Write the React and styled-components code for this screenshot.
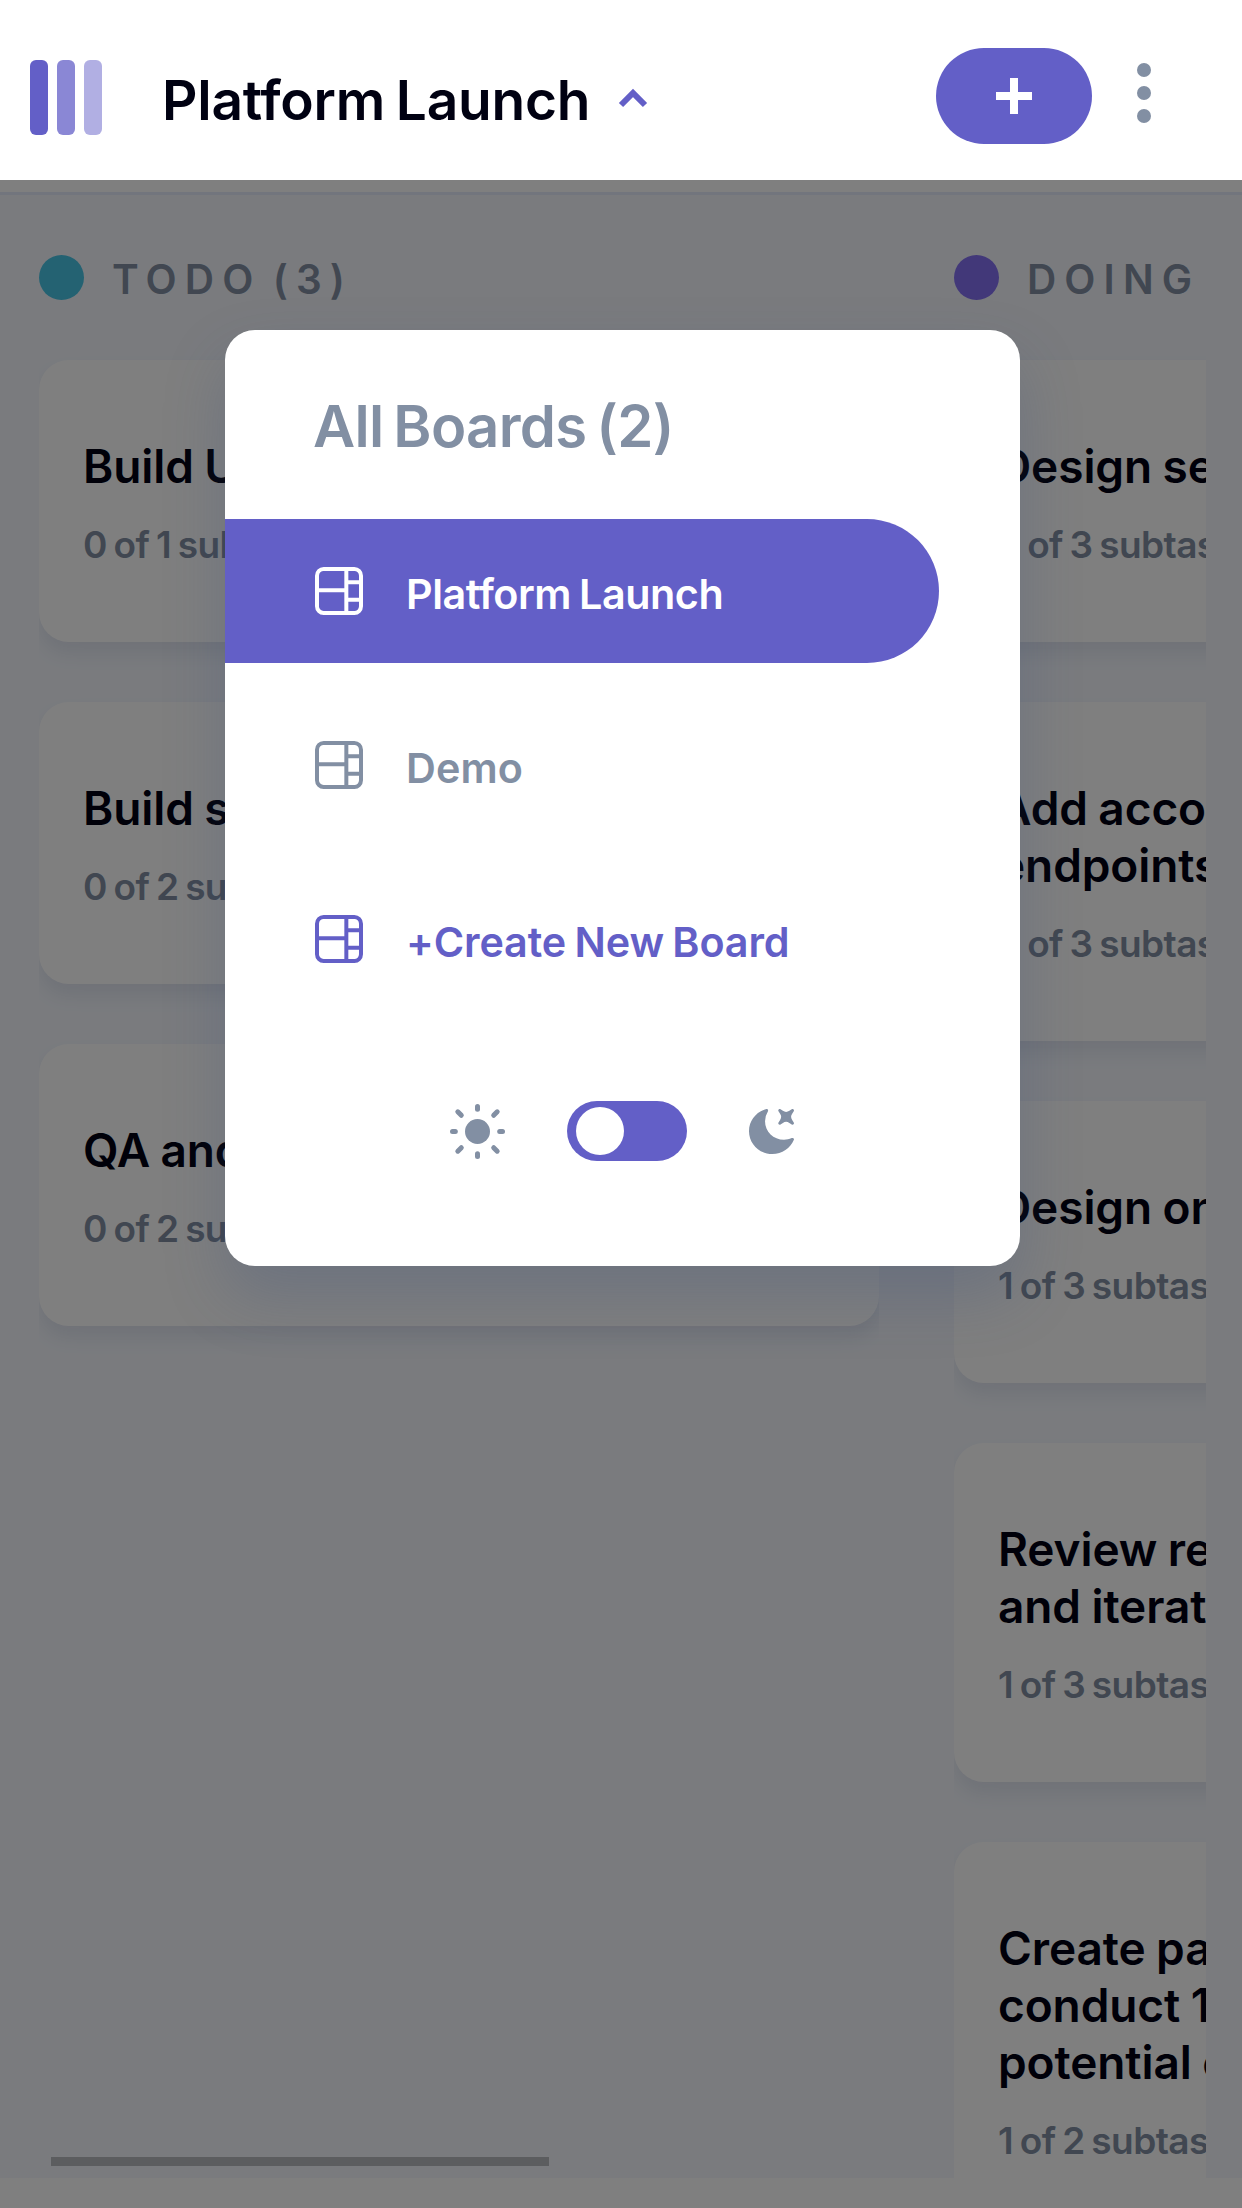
import React from "react";
import styled, { createGlobalStyle } from "styled-components";

const GlobalStyle = createGlobalStyle`
  *, *::before, *::after { box-sizing: border-box; }
  body { margin: 0; background: #fff; font-family: Inter, "Open Sans", sans-serif; }
  button { font: inherit; border: 0; margin: 0; padding: 0; background: none; color: inherit; }
  h1, h2, h3, p, ul { margin: 0; padding: 0; }
  svg { display: block; flex: none; }
`;

const colors = {
  purple: "#635fc7",
  ink: "#000112",
  slate: "#828fa3",
  page: "#f4f7fd",
  line: "#e4ebfa",
};

const Page = styled.div`
  position: relative;
  display: flex;
  flex-direction: column;
  width: 1242px;
  height: 2208px;
  overflow: hidden;
  background: #fff;
`;

const TopBar = styled.header`
  display: flex;
  align-items: flex-start;
  flex: none;
  height: 180px;
  padding-left: 30px;
  background: #fff;
`;

const Logo = styled.div`
  display: flex;
  gap: 9px;
  margin-top: 60px;
`;

const LogoBar = styled.span`
  width: 18px;
  height: 75px;
  border-radius: 6px;
  background: ${colors.purple};
  opacity: ${(p) => p.$opacity};
`;

const BoardButton = styled.button`
  display: flex;
  align-items: center;
  width: 772px;
  height: 72px;
  margin: 64px 0 0 60px;
  text-align: left;
`;

const BoardName = styled.span`
  width: 456px;
  white-space: nowrap;
  color: ${colors.ink};
  font-size: 55px;
  line-height: 72px;
  font-weight: 600;
  letter-spacing: -0.2px;
  word-spacing: -3px;
`;

const Chevron = styled.svg`
  margin-bottom: 5px;
`;

const AddButton = styled.button`
  display: grid;
  place-items: center;
  width: 156px;
  height: 96px;
  margin: 48px 45px 0 2px;
  border-radius: 48px;
  background: ${colors.purple};
`;

const MenuButton = styled.button`
  margin-top: 63px;
`;

const Rule = styled.div`
  flex: none;
  height: 15px;
  border-bottom: 3px solid ${colors.line};
  background: #fff;
`;

const Board = styled.main`
  position: relative;
  flex: none;
  height: 1983px;
  padding: 60px 36px 0 39px;
  background: ${colors.page};
`;

const Columns = styled.div`
  display: flex;
  gap: 75px;
  height: 100%;
  overflow: hidden;
`;

const ScrollThumb = styled.div`
  position: absolute;
  left: 51px;
  bottom: 12px;
  width: 498px;
  height: 9px;
  background: #b9bbbf;
`;

const Column = styled.section`
  flex: none;
  width: 840px;
  overflow: hidden;
`;

const ColumnHeader = styled.div`
  display: flex;
  align-items: center;
  gap: 28px;
  height: 45px;
`;

const Dot = styled.span`
  width: 45px;
  height: 45px;
  border-radius: 50%;
  background: ${(p) => p.$color};
`;

const ColumnTitle = styled.h2`
  padding-top: 4px;
  color: ${colors.slate};
  font-size: 40.5px;
  line-height: 45px;
  font-weight: 600;
  letter-spacing: 8.1px;
  word-spacing: -7px;
  white-space: nowrap;
`;

const CardList = styled.div`
  display: flex;
  flex-direction: column;
  gap: 60px;
  padding: 60px 0;
`;

const Card = styled.article`
  flex: none;
  padding: 78px 44px 73px;
  border-radius: 30px;
  background: #fff;
  box-shadow: 0 12px 18px rgba(54, 78, 126, 0.1);
`;

const CardTitle = styled.h3`
  white-space: pre;
  color: ${colors.ink};
  font-size: 46px;
  line-height: 57px;
  font-weight: 600;
  letter-spacing: -0.1px;
  word-spacing: -1px;
`;

const CardMeta = styled.p`
  padding-top: 26px;
  white-space: nowrap;
  color: ${colors.slate};
  font-size: 37px;
  line-height: 48px;
  font-weight: 600;
  letter-spacing: -0.6px;
  word-spacing: -2px;
`;

const Overlay = styled.div`
  position: absolute;
  inset: 180px 0 0 0;
  display: flex;
  align-items: flex-start;
  padding: 150px 0 0 225px;
  background: rgba(0, 0, 0, 0.5);
`;

const Dialog = styled.nav`
  width: 795px;
  height: 936px;
  border-radius: 30px;
  background: #fff;
  box-shadow: 0 30px 60px rgba(54, 78, 126, 0.25);
`;

const DialogTitle = styled.h2`
  padding: 60px 0 57px 88px;
  color: ${colors.slate};
  font-size: 58px;
  line-height: 72px;
  font-weight: 600;
  letter-spacing: -0.7px;
  word-spacing: -4px;
`;

const BoardList = styled.div`
  display: flex;
  flex-direction: column;
  gap: 30px;
`;

const tones = {
  active: { color: "#fff", background: colors.purple, tracking: "-0.45px" },
  idle: { color: colors.slate, background: "transparent", tracking: "0.1px" },
  create: { color: colors.purple, background: "transparent", tracking: "-0.1px" },
};

const BoardItem = styled.button`
  display: flex;
  align-items: center;
  gap: 43px;
  width: 714px;
  height: 144px;
  padding-left: 90px;
  border-radius: 0 72px 72px 0;
  color: ${(p) => tones[p.$tone].color};
  background: ${(p) => tones[p.$tone].background};
  letter-spacing: ${(p) => tones[p.$tone].tracking};
`;

const BoardLabel = styled.span`
  padding-top: 6px;
  white-space: nowrap;
  font-size: 41.3px;
  line-height: 54px;
  font-weight: 600;
  word-spacing: -2px;
`;

const ThemeRow = styled.div`
  display: flex;
  align-items: center;
  justify-content: center;
  gap: 60px;
  height: 60px;
  margin-top: 90px;
`;

const Toggle = styled.button`
  display: flex;
  align-items: center;
  width: 120px;
  height: 60px;
  padding-left: 9px;
  border-radius: 30px;
  background: ${colors.purple};
`;

const Knob = styled.span`
  width: 48px;
  height: 48px;
  border-radius: 50%;
  background: #fff;
`;

const BoardIcon = () => (
  <svg width="48" height="48" viewBox="0 0 16 16" fill="currentColor">
    <path d="M0 2.889A2.889 2.889 0 0 1 2.889 0H13.11A2.889 2.889 0 0 1 16 2.889V13.11A2.888 2.888 0 0 1 13.111 16H2.89A2.889 2.889 0 0 1 0 13.111V2.89Zm1.333 5.555v4.667c0 .859.697 1.556 1.556 1.556h6.889V8.444H1.333Zm8.445-1.333V1.333h-6.89A1.556 1.556 0 0 0 1.334 2.89V7.11h8.445Zm4.889-1.333H11.11v4.444h3.556V5.778Zm0 5.778H11.11v3.11h2a1.556 1.556 0 0 0 1.556-1.555v-1.555Zm0-7.112V2.89a1.555 1.555 0 0 0-1.556-1.556h-2v3.111h3.556Z" />
  </svg>
);

const rays = [
  [0, -25, 0, -22.2],
  [0, 25, 0, 22.2],
  [-25, 0, -22.2, 0],
  [25, 0, 22.2, 0],
  [-19.7, -19.7, -16.2, -16.2],
  [19.7, -19.7, 16.2, -16.2],
  [-19.7, 19.7, -16.2, 16.2],
  [19.7, 19.7, 16.2, 16.2],
];

const SunIcon = () => (
  <svg width="57" height="57" viewBox="-27.5 -28.5 57 57">
    <circle r="12.5" fill={colors.slate} />
    <g stroke={colors.slate} strokeWidth="5" strokeLinecap="round">
      {rays.map(([x1, y1, x2, y2], i) => (
        <line key={i} x1={x1} y1={y1} x2={x2} y2={y2} />
      ))}
    </g>
  </svg>
);

const MoonIcon = () => (
  <svg width="48" height="48" viewBox="0 0 16 16" fill={colors.slate}>
    <path d="M6.474.682c.434-.11.718.406.481.78A6.067 6.067 0 0 0 6.01 4.72c0 3.418 2.827 6.187 6.314 6.187.89.002 1.77-.182 2.584-.54.408-.18.894.165.724.57-1.16 2.775-3.944 4.73-7.194 4.73-4.292 0-7.771-3.41-7.771-7.615 0-3.541 2.466-6.518 5.807-7.37Zm8.433.07c.442-.294.969.232.674.674l-.525.787a1.943 1.943 0 0 0 0 2.157l.525.788c.295.441-.232.968-.674.673l-.787-.525a1.943 1.943 0 0 0-2.157 0l-.786.525c-.442.295-.97-.232-.675-.673l.525-.788a1.943 1.943 0 0 0 0-2.157l-.525-.787c-.295-.442.232-.968.674-.673l.787.525a1.943 1.943 0 0 0 2.157 0Z" />
  </svg>
);

const columns = [
  {
    title: "TODO (3)",
    color: "#49c4e5",
    cards: [
      { title: "Build UI for onboarding flow", meta: "0 of 1 subtasks" },
      { title: "Build settings UI", meta: "0 of 2 subtasks" },
      { title: "QA and test all major user journeys", meta: "0 of 2 subtasks" },
    ],
  },
  {
    title: "DOING (5)",
    color: "#8471f2",
    cards: [
      { title: "Design settings", meta: "2 of 3 subtasks" },
      { title: "Add account management\nendpoints", meta: "2 of 3 subtasks" },
      { title: "Design onboarding flow", meta: "1 of 3 subtasks" },
      { title: "Review results of usability tests\nand iterate", meta: "1 of 3 subtasks" },
      {
        title: "Create paper prototypes and\nconduct 10 usability tests with\npotential customers",
        meta: "1 of 2 subtasks",
      },
    ],
  },
];

const boards = [
  { label: "Platform Launch", tone: "active" },
  { label: "Demo", tone: "idle" },
  { label: "+Create New Board", tone: "create" },
];

export default function App() {
  return (
    <>
      <GlobalStyle />
      <Page>
        <TopBar>
          <Logo>
            <LogoBar $opacity={1} />
            <LogoBar $opacity={0.75} />
            <LogoBar $opacity={0.5} />
          </Logo>
          <BoardButton>
            <BoardName>Platform Launch</BoardName>
            <Chevron width="30" height="21" viewBox="0 0 10 7" fill="none">
              <path d="M9 6 5 2 1 6" stroke={colors.purple} strokeWidth="2" />
            </Chevron>
          </BoardButton>
          <AddButton aria-label="Add task">
            <svg width="36" height="36" viewBox="0 0 36 36" fill="#fff">
              <path d="M14 0h8v14h14v8H22v14h-8V22H0v-8h14z" />
            </svg>
          </AddButton>
          <MenuButton aria-label="Board menu">
            <svg width="14" height="60" viewBox="0 0 14 60" fill={colors.slate}>
              <circle cx="7" cy="7" r="7" />
              <circle cx="7" cy="30" r="7" />
              <circle cx="7" cy="53" r="7" />
            </svg>
          </MenuButton>
        </TopBar>
        <Rule />
        <Board>
          <Columns>
            {columns.map((column) => (
              <Column key={column.title}>
                <ColumnHeader>
                  <Dot $color={column.color} />
                  <ColumnTitle>{column.title}</ColumnTitle>
                </ColumnHeader>
                <CardList>
                  {column.cards.map((card) => (
                    <Card key={card.title}>
                      <CardTitle>{card.title}</CardTitle>
                      <CardMeta>{card.meta}</CardMeta>
                    </Card>
                  ))}
                </CardList>
              </Column>
            ))}
          </Columns>
          <ScrollThumb />
        </Board>
        <Overlay>
          <Dialog>
            <DialogTitle>All Boards (2)</DialogTitle>
            <BoardList>
              {boards.map((board) => (
                <BoardItem key={board.label} $tone={board.tone}>
                  <BoardIcon />
                  <BoardLabel>{board.label}</BoardLabel>
                </BoardItem>
              ))}
            </BoardList>
            <ThemeRow>
              <SunIcon />
              <Toggle aria-label="Toggle theme">
                <Knob />
              </Toggle>
              <MoonIcon />
            </ThemeRow>
          </Dialog>
        </Overlay>
      </Page>
    </>
  );
}
